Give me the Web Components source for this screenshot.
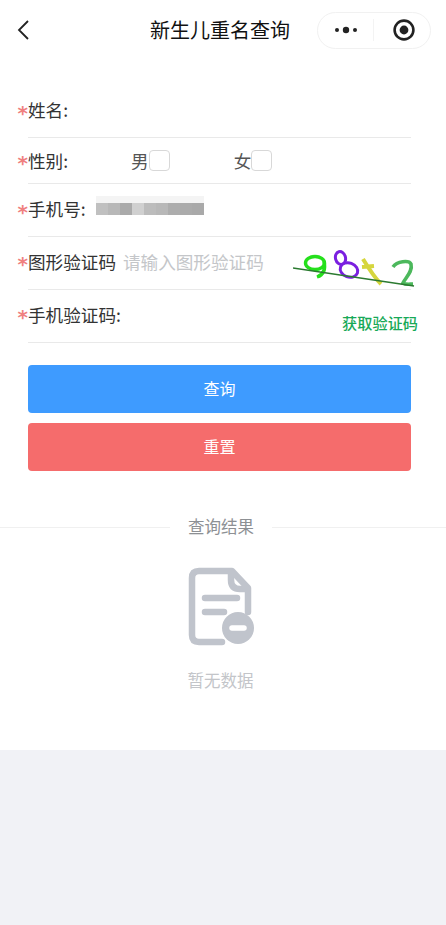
<!DOCTYPE html>
<html lang="zh">
<head>
<meta charset="utf-8">
<title>新生儿重名查询</title>
<style>
    html, body { margin: 0; padding: 0; height: 100%; background: #f1f2f6; }
    body { font-family: "Noto Sans CJK SC", "Liberation Sans", sans-serif; }
</style>
</head>
<body>
<nav-bar>新生儿重名查询</nav-bar>
<query-form></query-form>
<query-result></query-result>

<script>
(function() {
    function define(name, html) {
        const template = document.createElement('template');
        template.innerHTML = html;
        customElements.define(name, class extends HTMLElement {
            constructor() {
                super();
                this.attachShadow({mode: 'open'});
                this.shadowRoot.appendChild(template.content.cloneNode(true));
            }
        });
    }

    define('nav-bar', `
        <style>
            :host { display: flex; align-items: center; height: 60px; background: #fff; position: relative; color: #111; }
            .back { margin-left: 16px; width: 14px; height: 22px; }
            .title { position: absolute; left: 150px; top: 18px; font-size: 20px; line-height: 24px; }
            .capsule { margin-left: auto; margin-right: 15px; width: 114px; height: 37px; box-sizing: border-box; border: 1px solid #f1f1f1; border-radius: 19px; display: flex; align-items: center; }
            .dots { width: 55px; display: flex; justify-content: center; }
            .sep { width: 1px; height: 22px; background: #f3f3f3; }
            .rec { flex: 1; display: flex; justify-content: center; padding-left: 3px; }
        </style>
        <svg class="back" viewBox="0 0 14 22"><path d="M12 2 L3 11 L12 20" fill="none" stroke="#222" stroke-width="1.8"/></svg>
        <div class="title"><slot></slot></div>
        <div class="capsule">
            <div class="dots"><svg width="24" height="8" viewBox="0 0 24 8"><circle cx="3" cy="4" r="2" fill="#222"/><circle cx="12" cy="4" r="3.2" fill="#222"/><circle cx="21" cy="4" r="2" fill="#222"/></svg></div>
            <div class="sep"></div>
            <div class="rec"><svg width="22" height="22" viewBox="0 0 22 22"><circle cx="11" cy="11" r="9.4" fill="none" stroke="#222" stroke-width="2.6"/><circle cx="11" cy="11" r="4.4" fill="#222"/></svg></div>
        </div>
    `);

    define('form-row', `
        <style>
            :host { display: block; position: relative; margin-left: 28px; margin-right: 35px; border-bottom: 1px solid #e9e9e9; box-sizing: border-box; font-size: 17.6px; color: #333; }
            .inner { display: flex; align-items: center; height: 100%; padding-bottom: var(--row-pad, 4px); box-sizing: border-box; }
            .star { position: absolute; left: -10.5px; top: var(--star-top, 14px); color: #ef8080; font-size: 20px; font-weight: bold; line-height: 20px; font-family: "DejaVu Sans", sans-serif; }
        </style>
        <span class="star">*</span>
        <div class="inner"><slot></slot></div>
    `);

    define('check-box', `
        <style>
            :host { display: inline-flex; align-items: center; color: #555; font-size: 17.6px; }
            .box { width: 21px; height: 21px; box-sizing: border-box; border: 1px solid #d8d8d8; border-radius: 4px; background: #fff; }
        </style>
        <slot></slot><span class="box"></span>
    `);

    define('query-form', `
        <style>
            :host { display: block; background: #fff; padding-top: 28px; }
            .name { height: 50px; --row-pad: 6px; --star-top: 15px; }
            .gender { height: 46px; --row-pad: 0px; --star-top: 15px; }
            .phone { height: 53px; --row-pad: 3px; --star-top: 18px; }
            .captcha { height: 53px; --row-pad: 3px; --star-top: 17px; }
            .sms { height: 53px; --row-pad: 3px; --star-top: 17px; }
            .blur { position: relative; margin-left: 10px; width: 108px; height: 12px; margin-top: 1px; display: flex; }
            .blur i { flex: 1; }
            .halo { position: absolute; left: 0; right: 0; top: -7px; height: 7px; background: #f4f4f4; }
            .m1 { margin-left: 63px; }
            .m2 { margin-left: 64px; }
            .ph { margin-left: 7px; color: #c4c6c9; }
            .captcha-img { position: absolute; left: 265px; top: 7px; }
            .get { position: absolute; right: -7px; top: 22px; color: #18a957; font-size: 15.2px; line-height: 20px; font-weight: 500; }
            .btn { margin: 0 35px 0 28px; height: 48px; padding-bottom: 2px; box-sizing: border-box; border-radius: 4px; color: #fff; font-size: 16px; display: flex; align-items: center; justify-content: center; }
            .query { margin-top: 22px; background: #3e9bff; }
            .reset { margin-top: 10px; background: #f56c6c; }
        </style>
        <form-row class="name">姓名:</form-row>
        <form-row class="gender">性别:<check-box class="m1">男</check-box><check-box class="m2">女</check-box></form-row>
        <form-row class="phone">手机号:
            <div class="blur">
                <span class="halo"></span>
                <i style="background:#c0c0c0"></i><i style="background:#b8b8b8"></i><i style="background:#aaa"></i><i style="background:#d0d0d0"></i><i style="background:#bcbcbc"></i><i style="background:#b8b8b8"></i><i style="background:#adadad"></i><i style="background:#ababab"></i><i style="background:#a9a9a9"></i>
            </div>
        </form-row>
        <form-row class="captcha">图形验证码<span class="ph">请输入图形验证码</span>
            <svg class="captcha-img" width="124" height="46" viewBox="0 0 124 46" fill="none">
                <ellipse cx="22" cy="19" rx="9.5" ry="6.5" stroke="#25e01c" stroke-width="3.4"/>
                <path d="M31 17 C33 26 30 31 24 33" stroke="#25e01c" stroke-width="3.4"/>
                <ellipse cx="47.5" cy="14" rx="5" ry="6.5" transform="rotate(-15 47.5 14)" stroke="#7a1fe0" stroke-width="3"/>
                <ellipse cx="56" cy="26" rx="9" ry="7" transform="rotate(20 56 26)" stroke="#7a1fe0" stroke-width="3"/>
                <path d="M70 15 C76 25 82 34 88 40 M69 23 L81 22" stroke="#d6d63e" stroke-width="4"/>
                <path d="M100 23 C104 17 116 16 118 20 C120 28 112 34 110 39 C113 41 117 40 120 40" stroke="#4cb85c" stroke-width="3.6"/>
                <path d="M0 24 L121 42" stroke="#2b7a30" stroke-width="1.5"/>
            </svg>
        </form-row>
        <form-row class="sms">手机验证码:<span class="get">获取验证码</span></form-row>
        <div class="btn query">查询</div>
        <div class="btn reset">重置</div>
    `);

    define('query-result', `
        <style>
            :host { display: block; background: #fff; height: 279px; }
            .divider { display: flex; align-items: center; padding-top: 43px; color: #8d9094; font-size: 16.5px; line-height: 24px; }
            .divider span { margin: 0 18px; }
            .divider i { width: 170px; height: 1px; margin-top: 2px; background: #f0f0f0; }
            .divider i:last-child { width: auto; flex: 1; }
            .empty { display: flex; flex-direction: column; align-items: center; width: 441px; padding-top: 28px; font-size: 16.5px; color: #c3c5c9; }
            .empty svg { width: 70px; height: 82px; margin-left: 3px; }
            .empty div { margin-top: 20px; line-height: 24px; }
        </style>
        <div class="divider"><i></i><span>查询结果</span><i></i></div>
        <div class="empty">
            <svg viewBox="0 0 70 82" fill="none">
                <path d="M35 76 H12 Q5 76 5 69 V12 Q5 5 12 5 H45 L61 22 V46" stroke="#c0c4cc" stroke-width="6.5" stroke-linecap="round" stroke-linejoin="round"/>
                <path d="M44 6 V14 Q44 23 53 23 H60" stroke="#c0c4cc" stroke-width="6.5" stroke-linecap="round"/>
                <path d="M18 32 H50 M18 46 H37" stroke="#c0c4cc" stroke-width="6.5" stroke-linecap="round"/>
                <circle cx="51" cy="62" r="16" fill="#c0c4cc"/>
                <path d="M45 62 H57" stroke="#fff" stroke-width="5.5" stroke-linecap="round"/>
            </svg>
            <div>暂无数据</div>
        </div>
    `);
})();
</script>
</body>
</html>
